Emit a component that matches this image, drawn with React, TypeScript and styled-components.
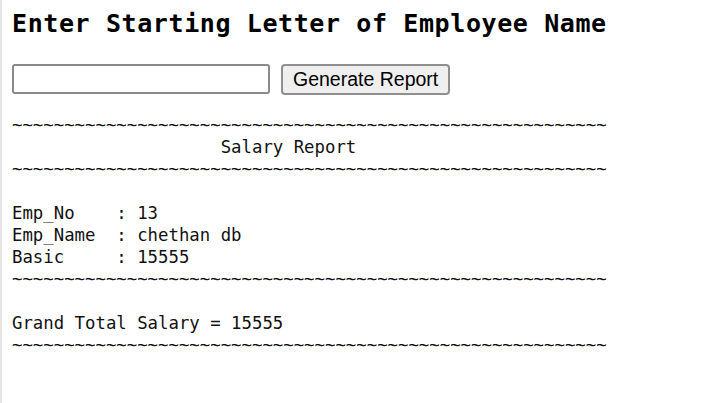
import React from "react";
import styled, { createGlobalStyle } from "styled-components";

const GlobalStyle = createGlobalStyle`
  html {
    border-left: 2px solid #e6e6e6;
    background: #ffffff;
    min-height: 100%;
  }
  body {
    margin: 0;
    background: #ffffff;
    color: #000000;
  }
`;

const Page = styled.div`
  padding: 9px 10px 0 10px;
`;

const Heading = styled.h2`
  margin: 0;
  font-family: "DejaVu Sans Mono", monospace;
  font-weight: bold;
  font-size: 25px;
  letter-spacing: 0.6px;
  line-height: 30px;
  color: #000;
  white-space: nowrap;
`;

const FormRow = styled.div`
  display: flex;
  align-items: flex-start;
  gap: 11px;
  margin-top: 25px;
`;

const TextInput = styled.input`
  box-sizing: border-box;
  width: 258px;
  height: 30px;
  margin: 0;
  padding: 2px 4px;
  border: 2px solid #8a8a8a;
  border-radius: 3px;
  background: #fff;
  font-family: "Liberation Sans", Arial, sans-serif;
  font-size: 19px;
  outline: none;
`;

const Button = styled.button`
  box-sizing: border-box;
  height: 31px;
  margin: 0;
  padding: 0 10px;
  border: 2px solid #8f8f8f;
  border-radius: 4px;
  background: #efefef;
  color: #000;
  font-family: "Liberation Sans", Arial, sans-serif;
  font-size: 19.5px;
  line-height: 1;
  cursor: pointer;
`;

const Report = styled.pre`
  margin: 19px 0 0 0;
  font-family: "DejaVu Sans Mono", monospace;
  font-size: 17.34px;
  line-height: 22px;
  color: #111;
`;

const tildes = "~".repeat(57);

const reportText = [
  tildes,
  " ".repeat(20) + "Salary Report",
  tildes,
  "",
  "Emp_No    : 13",
  "Emp_Name  : chethan db",
  "Basic     : 15555",
  tildes,
  "",
  "Grand Total Salary = 15555",
  tildes,
].join("\n");

export default function App() {
  return (
    <>
      <GlobalStyle />
      <Page>
        <Heading>Enter Starting Letter of Employee Name</Heading>
        <FormRow>
          <TextInput type="text" />
          <Button type="button">Generate Report</Button>
        </FormRow>
        <Report>{reportText}</Report>
      </Page>
    </>
  );
}
